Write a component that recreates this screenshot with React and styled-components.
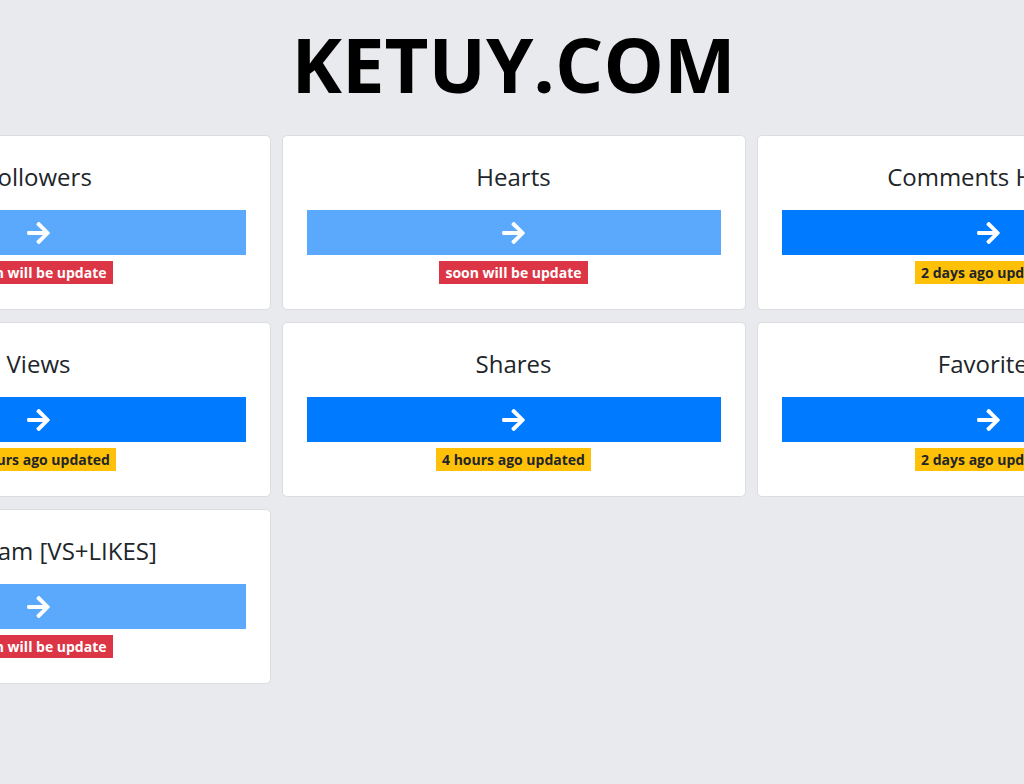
import React from 'react';
import styled, {createGlobalStyle} from 'styled-components';

const GlobalStyle = createGlobalStyle`
  html, body {
    margin: 0;
    background-color: #e9eaee;
    font-family: "Open Sans", "Noto Sans", sans-serif;
    color: #212529;
  }
`;

const Page = styled.div`
  overflow: hidden;
  padding: 18px 0 40px 3px;
  min-height: 784px;
  box-sizing: border-box;
`;

const SiteTitle = styled.h1`
  margin: 0 0 26px;
  text-align: center;
  font-size: 76px;
  line-height: 1.2;
  font-weight: 700;
  color: #000;
`;

const Grid = styled.div`
  display: grid;
  grid-template-columns: repeat(3, 464px);
  gap: 12px 11px;
  justify-content: center;
`;

const Card = styled.div`
  background: #fff;
  border: 1px solid #dcdde1;
  border-radius: 5px;
  padding: 26px 24px 25px;
  display: flex;
  flex-direction: column;
  align-items: center;
`;

const CardTitle = styled.h3`
  margin: 0 0 19px;
  font-size: 24px;
  line-height: 29px;
  font-weight: 400;
  white-space: nowrap;
`;

const GoButton = styled.button`
  width: 100%;
  height: 45px;
  border: none;
  display: flex;
  align-items: center;
  justify-content: center;
  color: #fff;
  background-color: ${p => (p.disabled ? '#5aa9fd' : '#007bff')};
  cursor: ${p => (p.disabled ? 'default' : 'pointer')};
  padding: 0;
`;

const Badge = styled.span`
  margin-top: 6px;
  height: 23px;
  padding: 0 6px;
  display: inline-flex;
  align-items: center;
  font-size: 14px;
  font-weight: 700;
  white-space: nowrap;
  background-color: ${p => (p.soon ? '#dc3545' : '#ffc107')};
  color: ${p => (p.soon ? '#fff' : '#212529')};
`;

// solid arrow-right, the chunky rounded one
const ArrowIcon = () => (
  <svg width="23" height="26" viewBox="0 0 448 512" fill="currentColor">
    <path d="M190.5 66.9l22.2-22.2c9.4-9.4 24.6-9.4 33.9 0L441 239c9.4 9.4 9.4 24.6 0 33.9L246.6 467.3c-9.4 9.4-24.6 9.4-33.9 0l-22.2-22.2c-9.5-9.5-9.3-25 .4-34.3L311.4 296H24c-13.3 0-24-10.7-24-24v-32c0-13.3 10.7-24 24-24h287.4L190.9 101.2c-9.8-9.3-10-24.8-.4-34.3z" />
  </svg>
);

const services = [
  {name: 'Followers', status: null},
  {name: 'Hearts', status: null},
  {name: 'Comments Hearts', status: '2 days ago updated'},
  {name: 'Views', status: '4 hours ago updated'},
  {name: 'Shares', status: '4 hours ago updated'},
  {name: 'Favorites', status: '2 days ago updated'},
  {name: 'Instagram [VS+LIKES]', status: null}
];

export default function App() {
  return (
    <Page>
      <GlobalStyle />
      <SiteTitle>KETUY.COM</SiteTitle>
      <Grid>
        {services.map(s => (
          <Card key={s.name}>
            <CardTitle>{s.name}</CardTitle>
            <GoButton disabled={!s.status}>
              <ArrowIcon />
            </GoButton>
            <Badge soon={!s.status}>{s.status || 'soon will be update'}</Badge>
          </Card>
        ))}
      </Grid>
    </Page>
  );
}
